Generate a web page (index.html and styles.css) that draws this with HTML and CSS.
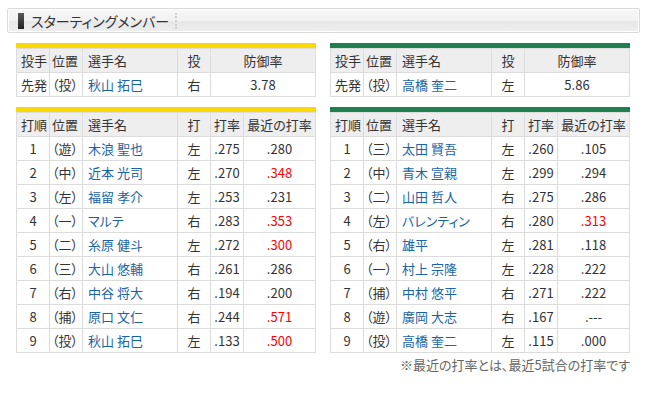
FILE: index.html
```html
<!DOCTYPE html>
<html lang="ja">
<head>
<meta charset="utf-8">
<title>スターティングメンバー</title>
<link rel="stylesheet" href="styles.css">
</head>
<body>
<div class="page">
  <div class="title-bar">
    <span class="mark"></span>
    <h2 class="title">スターティングメンバー</h2>
    <span class="sep"></span>
  </div>
  <div class="teams">
    <div class="team team-tigers">
      <div class="box">
        <table class="tbl">
          <colgroup><col class="c33"><col class="c33"><col class="c95"><col class="c33"><col></colgroup>
          <tr><th class="l">投手</th><th class="pos">位置</th><th class="name">選手名</th><th>投</th><th>防御率</th></tr>
          <tr><td class="l">先発</td><td class="pos">（投）</td><td class="name"><a>秋山 拓巳</a></td><td>右</td><td>3.78</td></tr>
        </table>
      </div>
      <div class="box">
        <table class="tbl">
          <colgroup><col class="c33"><col class="c33"><col class="c95"><col class="c33"><col class="c33"><col></colgroup>
          <tr><th class="l">打順</th><th class="pos">位置</th><th class="name">選手名</th><th>打</th><th>打率</th><th>最近の打率</th></tr>
          <tr><td>1</td><td class="pos">（遊）</td><td class="name"><a>木浪 聖也</a></td><td>左</td><td>.275</td><td>.280</td></tr>
          <tr><td>2</td><td class="pos">（中）</td><td class="name"><a>近本 光司</a></td><td>左</td><td>.270</td><td class="hot">.348</td></tr>
          <tr><td>3</td><td class="pos">（左）</td><td class="name"><a>福留 孝介</a></td><td>左</td><td>.253</td><td>.231</td></tr>
          <tr><td>4</td><td class="pos">（一）</td><td class="name"><a>マルテ</a></td><td>右</td><td>.283</td><td class="hot">.353</td></tr>
          <tr><td>5</td><td class="pos">（二）</td><td class="name"><a>糸原 健斗</a></td><td>左</td><td>.272</td><td class="hot">.300</td></tr>
          <tr><td>6</td><td class="pos">（三）</td><td class="name"><a>大山 悠輔</a></td><td>右</td><td>.261</td><td>.286</td></tr>
          <tr><td>7</td><td class="pos">（右）</td><td class="name"><a>中谷 将大</a></td><td>右</td><td>.194</td><td>.200</td></tr>
          <tr><td>8</td><td class="pos">（捕）</td><td class="name"><a>原口 文仁</a></td><td>右</td><td>.244</td><td class="hot">.571</td></tr>
          <tr><td>9</td><td class="pos">（投）</td><td class="name"><a>秋山 拓巳</a></td><td>左</td><td>.133</td><td class="hot">.500</td></tr>
        </table>
      </div>
    </div>
    <div class="team team-swallows">
      <div class="box">
        <table class="tbl">
          <colgroup><col class="c33"><col class="c33"><col class="c95"><col class="c33"><col></colgroup>
          <tr><th class="l">投手</th><th class="pos">位置</th><th class="name">選手名</th><th>投</th><th>防御率</th></tr>
          <tr><td class="l">先発</td><td class="pos">（投）</td><td class="name"><a>高橋 奎二</a></td><td>左</td><td>5.86</td></tr>
        </table>
      </div>
      <div class="box">
        <table class="tbl">
          <colgroup><col class="c33"><col class="c33"><col class="c95"><col class="c33"><col class="c33"><col></colgroup>
          <tr><th class="l">打順</th><th class="pos">位置</th><th class="name">選手名</th><th>打</th><th>打率</th><th>最近の打率</th></tr>
          <tr><td>1</td><td class="pos">（三）</td><td class="name"><a>太田 賢吾</a></td><td>左</td><td>.260</td><td>.105</td></tr>
          <tr><td>2</td><td class="pos">（中）</td><td class="name"><a>青木 宣親</a></td><td>左</td><td>.299</td><td>.294</td></tr>
          <tr><td>3</td><td class="pos">（二）</td><td class="name"><a>山田 哲人</a></td><td>右</td><td>.275</td><td>.286</td></tr>
          <tr><td>4</td><td class="pos">（左）</td><td class="name"><a>バレンティン</a></td><td>右</td><td>.280</td><td class="hot">.313</td></tr>
          <tr><td>5</td><td class="pos">（右）</td><td class="name"><a>雄平</a></td><td>左</td><td>.281</td><td>.118</td></tr>
          <tr><td>6</td><td class="pos">（一）</td><td class="name"><a>村上 宗隆</a></td><td>左</td><td>.228</td><td>.222</td></tr>
          <tr><td>7</td><td class="pos">（捕）</td><td class="name"><a>中村 悠平</a></td><td>右</td><td>.271</td><td>.222</td></tr>
          <tr><td>8</td><td class="pos">（遊）</td><td class="name"><a>廣岡 大志</a></td><td>右</td><td>.167</td><td>.---</td></tr>
          <tr><td>9</td><td class="pos">（投）</td><td class="name"><a>高橋 奎二</a></td><td>左</td><td>.115</td><td>.000</td></tr>
        </table>
      </div>
    </div>
  </div>
  <p class="note">※最近の打率とは、最近5試合の打率です</p>
</div>
</body>
</html>
```

FILE: styles.css
```css
body {
  margin: 0;
  background: #fff;
  font-family: "Noto Sans CJK JP", "Liberation Sans", sans-serif;
  font-size: 13px;
  color: #333;
  font-feature-settings: "palt";
}

.page {
  padding: 8px 10px 0 7px;
}

.title-bar {
  display: flex;
  align-items: center;
  height: 23px;
  padding-left: 10px;
  border: 1px solid #dadada;
  border-radius: 2px;
  box-shadow: inset 0 0 0 1px #fff;
  background: linear-gradient(#f8f8f8 0%, #f1f1f1 50%, #e7e7e7 52%, #eeeeee 100%);
}

.mark {
  width: 6px;
  height: 16px;
  background: linear-gradient(#5a5a5a, #222);
}

.title {
  margin: 0 0 0 7px;
  font-size: 14px;
  font-weight: normal;
  color: #333;
  line-height: 16px;
}

.sep {
  margin-left: 6px;
  height: 16px;
  border-left: 2px dotted #cfcfcf;
}

.teams {
  display: flex;
  gap: 14px;
  margin: 10px 0 0 9px;
}

.team {
  width: 300px;
}

.box {
  border-top: 5px solid #fbd800;
}

.team-swallows .box {
  border-top-color: #1f7f4f;
}

.box + .box {
  margin-top: 10px;
}

.tbl {
  width: 100%;
  border-collapse: collapse;
  table-layout: fixed;
}

.c33 { width: 33px; }
.c95 { width: 95px; }

.tbl th,
.tbl td {
  border: 1px solid #dcdcdc;
  height: 23px;
  padding: 0 2px;
  text-align: center;
  font-weight: normal;
  line-height: 16px;
  white-space: nowrap;
}

.tbl th {
  background: #eeeeee;
}

.tbl .l {
  text-align: left;
  padding-left: 4px;
}

.tbl .pos {
  text-align: left;
  padding-left: 2px;
}

.tbl .name {
  text-align: left;
  padding-left: 5px;
}

.tbl a {
  color: #1a64a6;
  text-decoration: none;
}

.tbl .hot {
  color: #ff0000;
}

.note {
  margin: 2px 10px 0 0;
  text-align: right;
  color: #666;
  line-height: 20px;
}
```
